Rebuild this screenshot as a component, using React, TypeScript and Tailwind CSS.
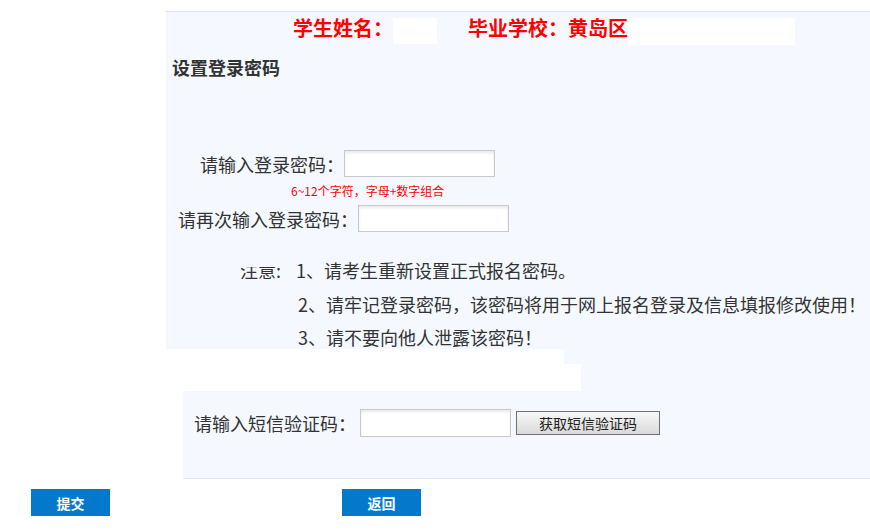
import React from 'react'

const font = { fontFamily: '"Noto Sans CJK SC", "Liberation Sans", sans-serif' }

function PwInput() {
  return (
    <input
      type="password"
      className="w-[151px] h-[27px] border border-[#c9c9c9] bg-white shadow-[inset_0_2px_3px_rgba(0,0,0,0.09)] outline-none"
    />
  )
}

export default function App() {
  return (
    <div className="w-[870px] h-[530px] bg-white text-[#333] font-['Noto_Sans_CJK_SC',sans-serif]" style={font}>
      <div className="h-[11px]" />

      {/* main panel */}
      <div className="relative ml-[166px] bg-[#f5f9ff] border-t border-b border-[#dbe6f2]">
        {/* header */}
        <div className="h-[32px] pl-[127px] flex items-center text-[20px] font-bold text-[#ff0000] leading-none">
          <span>学生姓名：</span>
          <span className="inline-block w-[44px] h-[26px] bg-white mt-[6px]" />
          <span className="ml-[31px]">毕业学校：黄岛区</span>
          <span className="inline-block w-[167px] h-[27px] bg-white mt-[6px]" />
        </div>

        {/* section title */}
        <div className="h-[46px] pl-[6px] flex items-center text-[18px] font-bold leading-none">设置登录密码</div>

        <div className="h-[60px]" />

        {/* password row */}
        <div className="h-[27px] pl-[34px] flex items-center text-[18px] leading-none">
          <span>请输入登录密码：</span>
          <PwInput />
        </div>
        <div className="h-[28px] pl-[125px] flex items-center text-[12px] text-[#ff0000] leading-none">
          6~12个字符，字母+数字组合
        </div>
        <div className="h-[27px] pl-[12px] flex items-center text-[18px] leading-none">
          <span>请再次输入登录密码：</span>
          <PwInput />
        </div>

        <div className="h-[21px]" />

        {/* notes */}
        <div className="text-[18px] leading-none">
          <div className="h-[34px] flex items-center">
            <span className="w-[130px] pl-[74px] [clip-path:inset(6px_0_0_0)]">注意:</span>
            <span>1、请考生重新设置正式报名密码。</span>
          </div>
          <div className="h-[33px] flex items-center pl-[132px]">
            2、请牢记登录密码，该密码将用于网上报名登录及信息填报修改使用！
          </div>
          <div className="h-[34px] flex items-center pl-[132px]">3、请不要向他人泄露该密码！</div>
        </div>

        <div className="h-[55px]" />

        {/* sms row */}
        <div className="h-[28px] pl-[28px] flex items-center text-[18px] leading-none">
          <span>请输入短信验证码：</span>
          <input
            type="text"
            className="ml-[4px] w-[151px] h-[28px] border border-[#c9c9c9] bg-white shadow-[inset_0_2px_3px_rgba(0,0,0,0.09)] outline-none"
          />
          <button className="ml-[5px] w-[144px] h-[24px] border border-[#707070] bg-gradient-to-b from-[#f7f7f7] to-[#dadada] text-[14px] text-[#222] leading-none">
            获取短信验证码
          </button>
        </div>

        <div className="h-[41px]" />

        {/* redaction patches */}
        <div className="absolute left-0 top-[337px] w-[398px] h-[15px] bg-white" />
        <div className="absolute left-0 top-[352px] w-[415px] h-[27px] bg-white" />
        <div className="absolute left-0 top-[379px] bottom-[-1px] w-[17px] bg-white" />
      </div>

      {/* buttons */}
      <div className="mt-[10px] pl-[31px] flex">
        <button className="w-[79px] h-[27px] bg-[#0479cc] text-white text-[14px] font-bold leading-none">提交</button>
        <button className="ml-[232px] w-[79px] h-[27px] bg-[#0479cc] text-white text-[14px] font-bold leading-none">返回</button>
      </div>
    </div>
  )
}
